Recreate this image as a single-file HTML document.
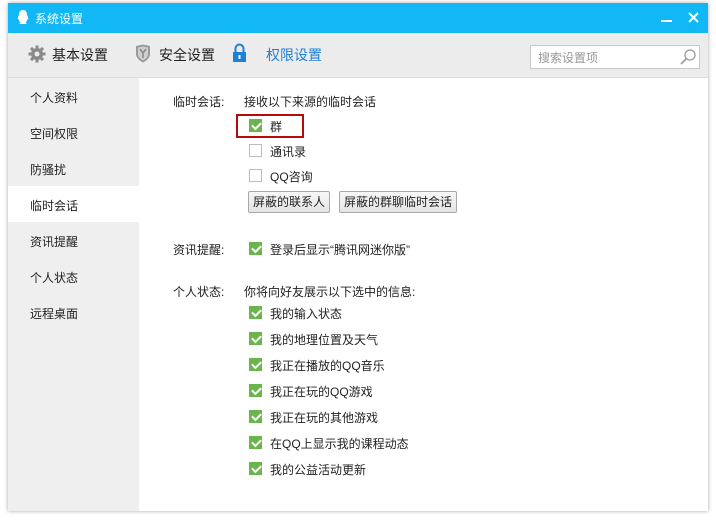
<!DOCTYPE html>
<html><head><meta charset="utf-8"><style>
*{margin:0;padding:0;box-sizing:border-box}
body{width:716px;height:522px;background:#fff;position:relative;overflow:hidden;font-family:"Liberation Sans","Noto Sans CJK SC",sans-serif;font-size:12px;color:#222}
.win{position:absolute;left:8px;top:3px;width:700px;height:508px;background:#fff;box-shadow:0 0 4px rgba(0,0,0,.35)}
.title{position:absolute;left:0;top:0;width:700px;height:30px;background:#12b7f5;color:#fff;font-size:12px}
.tb{position:absolute;left:0;top:30px;width:700px;height:45px;background:#ececec;border-bottom:1px solid #dcdcdc}
.side{position:absolute;left:0;top:75px;width:131px;height:433px;background:#efefef}
.a{position:absolute;white-space:nowrap}
.cb{position:absolute;width:13px;height:13px;border:1px solid #bdbdbd;background:#fff}
.cb.on{background:#6bb54d;border-color:#6bb54d}
.cb.on::after{content:"";position:absolute;left:2px;top:2px;width:7px;height:4px;border-left:2px solid #fff;border-bottom:2px solid #fff;transform:rotate(-45deg)}
.btn{position:absolute;height:22px;border:1px solid #a9a9a9;border-radius:2px;background:linear-gradient(#f7f7f7,#e4e4e4);font-size:12px;line-height:20px;padding:0 4px}
</style></head><body>
<div class="win">
 <div class="title">
  <svg class="a" style="left:8px;top:6px" width="14" height="17" viewBox="0 0 14 17"><path d="M7 1C4 1 3 3.5 3 6 2 7.5 1.5 9 2 11l1-1c0 2 .5 3 1.5 3.5L3 15h8l-1.5-1.5C10.5 13 11 12 11 10l1 1c.5-2 0-3.5-1-5 0-2.5-1-5-4-5z" fill="#fff"/></svg>
  <span class="a" style="left:27px;top:7px">系统设置</span>
  <div class="a" style="left:653px;top:17px;width:11px;height:2px;background:#fff"></div>
  <svg class="a" style="left:680px;top:9px" width="11" height="11"><path d="M1 1L10 10M10 1L1 10" stroke="#fff" stroke-width="2"/></svg>
 </div>
 <div class="tb">
  <svg class="a" style="left:20px;top:12px" width="18" height="18" viewBox="0 0 18 18"><g fill="#8a8a8a"><circle cx="9" cy="9" r="6"/><rect x="7.5" y="0.5" width="3" height="17"/><rect x="0.5" y="7.5" width="17" height="3"/><rect x="7.5" y="0.5" width="3" height="17" transform="rotate(45 9 9)"/><rect x="7.5" y="0.5" width="3" height="17" transform="rotate(-45 9 9)"/></g><circle cx="9" cy="9" r="2.5" fill="#ececec"/></svg>
  <span class="a" style="left:44px;top:12px;font-size:14px">基本设置</span>
  <svg class="a" style="left:127px;top:11px" width="16" height="19" viewBox="0 0 16 19"><path d="M1 2L8 0.5 15 2V10C15 14 11 17 8 18.5 5 17 1 14 1 10z" fill="#9a9a9a"/><path d="M3 3.5L8 2.5 13 3.5V10C13 13 10.5 15 8 16.5 5.5 15 3 13 3 10z" fill="#cfcfcf"/><path d="M5 5L8 9 11 5M8 9V14" stroke="#8a8a8a" stroke-width="1.6" fill="none"/></svg>
  <span class="a" style="left:151px;top:12px;font-size:14px">安全设置</span>
  <svg class="a" style="left:224px;top:10px" width="15" height="20" viewBox="0 0 15 20"><path d="M3.5 9V5.5a4 4 0 0 1 8 0V9" stroke="#1e7fd3" stroke-width="2" fill="none"/><rect x="1" y="9" width="13" height="10" fill="#1e7fd3"/><rect x="6.5" y="12" width="2" height="4" fill="#fff"/></svg>
  <span class="a" style="left:258px;top:12px;font-size:14px;color:#1e7fd3">权限设置</span>
  <div class="a" style="left:522px;top:12px;width:170px;height:24px;border:1px solid #c9c9c9;background:#fff"></div>
  <span class="a" style="left:530px;top:16px;color:#999">搜索设置项</span>
  <svg class="a" style="left:671px;top:15px" width="18" height="18"><circle cx="11" cy="7" r="5" stroke="#9a9a9a" stroke-width="1.3" fill="none"/><path d="M7.5 10.5L2 16" stroke="#9a9a9a" stroke-width="1.6"/></svg>
 </div>
 <div class="side">
  <div class="a" style="left:0;top:108px;width:131px;height:36px;background:#fff"></div>
  <span class="a" style="left:22px;top:11px">个人资料</span>
  <span class="a" style="left:22px;top:47px">空间权限</span>
  <span class="a" style="left:22px;top:83px">防骚扰</span>
  <span class="a" style="left:22px;top:119px">临时会话</span>
  <span class="a" style="left:22px;top:155px">资讯提醒</span>
  <span class="a" style="left:22px;top:191px">个人状态</span>
  <span class="a" style="left:22px;top:227px">远程桌面</span>
 </div>
</div>
<span class="a" style="left:173px;top:93px">临时会话:</span>
<span class="a" style="left:244px;top:93px">接收以下来源的临时会话</span>
<div class="a" style="left:236px;top:114px;width:68px;height:24px;border:2px solid #b50b0b"></div>
<div class="cb on" style="left:249px;top:119px"></div>
<span class="a" style="left:270px;top:118px">群</span>
<div class="cb" style="left:249px;top:144px"></div>
<span class="a" style="left:270px;top:143px">通讯录</span>
<div class="cb" style="left:249px;top:169px"></div>
<span class="a" style="left:270px;top:168px">QQ咨询</span>
<div class="btn" style="left:248px;top:191px">屏蔽的联系人</div>
<div class="btn" style="left:339px;top:191px">屏蔽的群聊临时会话</div>
<span class="a" style="left:173px;top:241px">资讯提醒:</span>
<div class="cb on" style="left:249px;top:242px"></div>
<span class="a" style="left:270px;top:241px">登录后显示“腾讯网迷你版”</span>
<span class="a" style="left:173px;top:283px">个人状态:</span>
<span class="a" style="left:244px;top:283px">你将向好友展示以下选中的信息:</span>
<div class="cb on" style="left:249px;top:306px"></div><span class="a" style="left:270px;top:305px">我的输入状态</span>
<div class="cb on" style="left:249px;top:332px"></div><span class="a" style="left:270px;top:331px">我的地理位置及天气</span>
<div class="cb on" style="left:249px;top:358px"></div><span class="a" style="left:270px;top:357px">我正在播放的QQ音乐</span>
<div class="cb on" style="left:249px;top:384px"></div><span class="a" style="left:270px;top:383px">我正在玩的QQ游戏</span>
<div class="cb on" style="left:249px;top:410px"></div><span class="a" style="left:270px;top:409px">我正在玩的其他游戏</span>
<div class="cb on" style="left:249px;top:436px"></div><span class="a" style="left:270px;top:435px">在QQ上显示我的课程动态</span>
<div class="cb on" style="left:249px;top:462px"></div><span class="a" style="left:270px;top:461px">我的公益活动更新</span>
</body></html>
